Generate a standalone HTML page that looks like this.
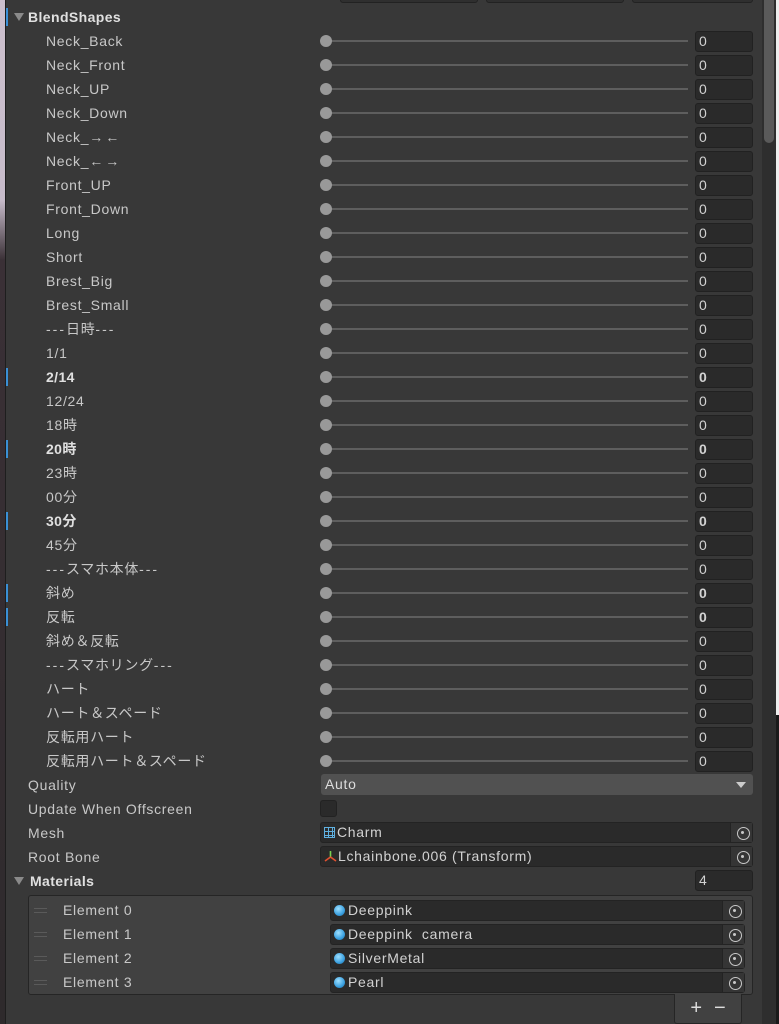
<!DOCTYPE html>
<html><head><meta charset="utf-8"><style>
*{margin:0;padding:0;box-sizing:border-box}
body{width:779px;height:1024px;background:#383838;position:relative;overflow:hidden;font-family:"Liberation Sans","Noto Sans CJK JP",sans-serif;font-size:14px;color:#c8c8c8;letter-spacing:0.7px}
.a{position:absolute}
.lbl{position:absolute;left:46px;height:20px;line-height:20px;white-space:nowrap}
.b{font-weight:bold;color:#e0e0e0;letter-spacing:0.4px}
.trk{position:absolute;left:326px;width:362px;height:2px;background:#5e5e5e}
.knob{position:absolute;left:320px;width:12px;height:12px;border-radius:50%;background:#999}
.num{position:absolute;left:695px;width:58px;height:21px;background:#2a2a2a;border:1px solid #212121;border-radius:3px;line-height:19px;padding-left:3px;color:#d2d2d2}
.mark{position:absolute;left:6px;width:2px;height:18px;background:#3a8fd6}
.obj{position:absolute;background:#2a2a2a;border:1px solid #232323;border-radius:3px;height:21px;line-height:19px;color:#d2d2d2;padding-left:3px}
.pick{position:absolute;right:0;top:0;width:22px;height:19px;background:#353535;border-left:1px solid #232323}
.pick:after{content:"";position:absolute;left:6px;top:4px;width:11px;height:11px;border:1.5px solid #c8c8c8;border-radius:50%}
.pick:before{content:"";position:absolute;left:10px;top:8px;width:3px;height:3px;background:#c8c8c8;border-radius:50%}
.ball{display:inline-block;width:11px;height:11px;border-radius:50%;background:radial-gradient(circle at 40% 35%,#9fe0ff,#3aa0e0 60%,#1d5f8f);margin-right:3px;vertical-align:-1px}
.tri{position:absolute;width:0;height:0;border-left:5px solid transparent;border-right:5px solid transparent;border-top:8px solid #8a8a8a}
.w{letter-spacing:2px}
</style></head><body>
<div class="a" style="left:0;top:0;width:5px;height:1024px;background:linear-gradient(#cbbfcd 0,#c7bbca 200px,#3a3036 260px,#2e2a2c 1024px)"></div>
<div class="a" style="left:5px;top:0;width:1px;height:1024px;background:#1e1e1e"></div>
<div class="a" style="left:762px;top:0;width:14px;height:1024px;background:#2e2e2e"></div>
<div class="a" style="left:764px;top:0;width:10px;height:143px;background:#5a5a5a;border-radius:0 0 5px 5px"></div>
<div class="a" style="left:776px;top:0;width:3px;height:715px;background:#eee"></div>
<div class="a" style="left:776px;top:715px;width:3px;height:309px;background:#1a1a1a"></div>
<div class="a" style="left:340px;top:-4px;width:138px;height:7px;background:#2f2f2f;border:1px solid #222;border-radius:3px"></div>
<div class="a" style="left:486px;top:-4px;width:138px;height:7px;background:#2f2f2f;border:1px solid #222;border-radius:3px"></div>
<div class="a" style="left:632px;top:-4px;width:121px;height:7px;background:#2f2f2f;border:1px solid #222;border-radius:3px"></div>

<div class="mark" style="top:8px"></div>
<div class="tri" style="left:14px;top:13px"></div>
<div class="lbl b" style="left:28px;top:7px">BlendShapes</div>

<div class="lbl" style="top:31px">Neck_Back</div><div class="trk" style="top:40px"></div><div class="knob" style="top:35px"></div><div class="num" style="top:31px">0</div>
<div class="lbl" style="top:55px">Neck_Front</div><div class="trk" style="top:64px"></div><div class="knob" style="top:59px"></div><div class="num" style="top:55px">0</div>
<div class="lbl" style="top:79px">Neck_UP</div><div class="trk" style="top:88px"></div><div class="knob" style="top:83px"></div><div class="num" style="top:79px">0</div>
<div class="lbl" style="top:103px">Neck_Down</div><div class="trk" style="top:112px"></div><div class="knob" style="top:107px"></div><div class="num" style="top:103px">0</div>
<div class="lbl" style="top:127px">Neck_<span class="w">→←</span></div><div class="trk" style="top:136px"></div><div class="knob" style="top:131px"></div><div class="num" style="top:127px">0</div>
<div class="lbl" style="top:151px">Neck_<span class="w">←→</span></div><div class="trk" style="top:160px"></div><div class="knob" style="top:155px"></div><div class="num" style="top:151px">0</div>
<div class="lbl" style="top:175px">Front_UP</div><div class="trk" style="top:184px"></div><div class="knob" style="top:179px"></div><div class="num" style="top:175px">0</div>
<div class="lbl" style="top:199px">Front_Down</div><div class="trk" style="top:208px"></div><div class="knob" style="top:203px"></div><div class="num" style="top:199px">0</div>
<div class="lbl" style="top:223px">Long</div><div class="trk" style="top:232px"></div><div class="knob" style="top:227px"></div><div class="num" style="top:223px">0</div>
<div class="lbl" style="top:247px">Short</div><div class="trk" style="top:256px"></div><div class="knob" style="top:251px"></div><div class="num" style="top:247px">0</div>
<div class="lbl" style="top:271px">Brest_Big</div><div class="trk" style="top:280px"></div><div class="knob" style="top:275px"></div><div class="num" style="top:271px">0</div>
<div class="lbl" style="top:295px">Brest_Small</div><div class="trk" style="top:304px"></div><div class="knob" style="top:299px"></div><div class="num" style="top:295px">0</div>
<div class="lbl" style="top:319px"><span class="w">---</span>日時<span class="w">---</span></div><div class="trk" style="top:328px"></div><div class="knob" style="top:323px"></div><div class="num" style="top:319px">0</div>
<div class="lbl" style="top:343px">1/1</div><div class="trk" style="top:352px"></div><div class="knob" style="top:347px"></div><div class="num" style="top:343px">0</div>
<div class="mark" style="top:368px"></div><div class="lbl b" style="top:367px">2/14</div><div class="trk" style="top:376px"></div><div class="knob" style="top:371px"></div><div class="num b" style="top:367px">0</div>
<div class="lbl" style="top:391px">12/24</div><div class="trk" style="top:400px"></div><div class="knob" style="top:395px"></div><div class="num" style="top:391px">0</div>
<div class="lbl" style="top:415px">18時</div><div class="trk" style="top:424px"></div><div class="knob" style="top:419px"></div><div class="num" style="top:415px">0</div>
<div class="mark" style="top:440px"></div><div class="lbl b" style="top:439px">20時</div><div class="trk" style="top:448px"></div><div class="knob" style="top:443px"></div><div class="num b" style="top:439px">0</div>
<div class="lbl" style="top:463px">23時</div><div class="trk" style="top:472px"></div><div class="knob" style="top:467px"></div><div class="num" style="top:463px">0</div>
<div class="lbl" style="top:487px">00分</div><div class="trk" style="top:496px"></div><div class="knob" style="top:491px"></div><div class="num" style="top:487px">0</div>
<div class="mark" style="top:512px"></div><div class="lbl b" style="top:511px">30分</div><div class="trk" style="top:520px"></div><div class="knob" style="top:515px"></div><div class="num b" style="top:511px">0</div>
<div class="lbl" style="top:535px">45分</div><div class="trk" style="top:544px"></div><div class="knob" style="top:539px"></div><div class="num" style="top:535px">0</div>
<div class="lbl" style="top:559px"><span class="w">---</span>スマホ本体<span class="w">---</span></div><div class="trk" style="top:568px"></div><div class="knob" style="top:563px"></div><div class="num" style="top:559px">0</div>
<div class="mark" style="top:584px"></div><div class="lbl" style="top:583px">斜め</div><div class="trk" style="top:592px"></div><div class="knob" style="top:587px"></div><div class="num b" style="top:583px">0</div>
<div class="mark" style="top:608px"></div><div class="lbl" style="top:607px">反転</div><div class="trk" style="top:616px"></div><div class="knob" style="top:611px"></div><div class="num b" style="top:607px">0</div>
<div class="lbl" style="top:631px">斜め＆反転</div><div class="trk" style="top:640px"></div><div class="knob" style="top:635px"></div><div class="num" style="top:631px">0</div>
<div class="lbl" style="top:655px"><span class="w">---</span>スマホリング<span class="w">---</span></div><div class="trk" style="top:664px"></div><div class="knob" style="top:659px"></div><div class="num" style="top:655px">0</div>
<div class="lbl" style="top:679px">ハート</div><div class="trk" style="top:688px"></div><div class="knob" style="top:683px"></div><div class="num" style="top:679px">0</div>
<div class="lbl" style="top:703px">ハート＆スペード</div><div class="trk" style="top:712px"></div><div class="knob" style="top:707px"></div><div class="num" style="top:703px">0</div>
<div class="lbl" style="top:727px">反転用ハート</div><div class="trk" style="top:736px"></div><div class="knob" style="top:731px"></div><div class="num" style="top:727px">0</div>
<div class="lbl" style="top:751px">反転用ハート＆スペード</div><div class="trk" style="top:760px"></div><div class="knob" style="top:755px"></div><div class="num" style="top:751px">0</div>

<div class="lbl" style="left:28px;top:775px">Quality</div>
<div class="a" style="left:321px;top:774px;width:432px;height:21px;background:#515151;border-radius:3px;color:#ddd;line-height:21px;padding-left:4px">Auto</div>
<div class="tri" style="left:736px;top:782px;border-top:6px solid #ccc;border-left-width:5px;border-right-width:5px"></div>
<div class="lbl" style="left:28px;top:799px">Update When Offscreen</div>
<div class="a" style="left:320px;top:800px;width:17px;height:17px;background:#2a2a2a;border:1px solid #222;border-radius:3px"></div>
<div class="lbl" style="left:28px;top:823px">Mesh</div>
<div class="obj" style="left:320px;top:822px;width:433px"><span style="display:inline-block;width:11px;height:11px;margin-right:2px;vertical-align:-1px;background:linear-gradient(90deg,transparent 3px,#5fb0e0 3px,#5fb0e0 4px,transparent 4px,transparent 7px,#5fb0e0 7px,#5fb0e0 8px,transparent 8px),linear-gradient(transparent 3px,#5fb0e0 3px,#5fb0e0 4px,transparent 4px,transparent 7px,#5fb0e0 7px,#5fb0e0 8px,transparent 8px);border:1px solid #5fb0e0"></span>Charm<div class="pick"></div></div>
<div class="lbl" style="left:28px;top:847px">Root Bone</div>
<div class="obj" style="left:320px;top:846px;width:433px"><svg width="13" height="12" viewBox="0 0 13 12" style="vertical-align:-1px;margin-right:1px"><line x1="6.5" y1="7" x2="6.5" y2="1" stroke="#7cd050" stroke-width="1.6"/><line x1="6.5" y1="7" x2="1" y2="11" stroke="#e05030" stroke-width="1.6"/><line x1="6.5" y1="7" x2="12" y2="11" stroke="#e05030" stroke-width="1.6"/></svg>Lchainbone.006 (Transform)<div class="pick"></div></div>
<div class="tri" style="left:14px;top:877px"></div>
<div class="lbl b" style="left:30px;top:871px">Materials</div>
<div class="num" style="top:870px">4</div>

<div class="a" style="left:28px;top:895px;width:725px;height:100px;background:#414141;border:1px solid #252525;border-radius:3px"></div>
<div class="a" style="left:34px;top:908px;width:13px;height:5px;border-top:1px solid #5a5a5a;border-bottom:1px solid #5a5a5a"></div>
<div class="lbl" style="left:63px;top:900px">Element 0</div>
<div class="obj" style="left:330px;top:900px;width:415px"><span class="ball"></span>Deeppink<div class="pick"></div></div>
<div class="a" style="left:34px;top:932px;width:13px;height:5px;border-top:1px solid #5a5a5a;border-bottom:1px solid #5a5a5a"></div>
<div class="lbl" style="left:63px;top:924px">Element 1</div>
<div class="obj" style="left:330px;top:924px;width:415px"><span class="ball"></span>Deeppink&nbsp; camera<div class="pick"></div></div>
<div class="a" style="left:34px;top:956px;width:13px;height:5px;border-top:1px solid #5a5a5a;border-bottom:1px solid #5a5a5a"></div>
<div class="lbl" style="left:63px;top:948px">Element 2</div>
<div class="obj" style="left:330px;top:948px;width:415px"><span class="ball"></span>SilverMetal<div class="pick"></div></div>
<div class="a" style="left:34px;top:980px;width:13px;height:5px;border-top:1px solid #5a5a5a;border-bottom:1px solid #5a5a5a"></div>
<div class="lbl" style="left:63px;top:972px">Element 3</div>
<div class="obj" style="left:330px;top:972px;width:415px"><span class="ball"></span>Pearl<div class="pick"></div></div>
<div class="a" style="left:674px;top:994px;width:68px;height:30px;background:#414141;border:1px solid #252525;border-top:none;border-radius:0 0 3px 3px;color:#ddd;font-size:20px;line-height:28px;text-align:center;letter-spacing:12px;padding-left:12px">+−</div>
</body></html>
